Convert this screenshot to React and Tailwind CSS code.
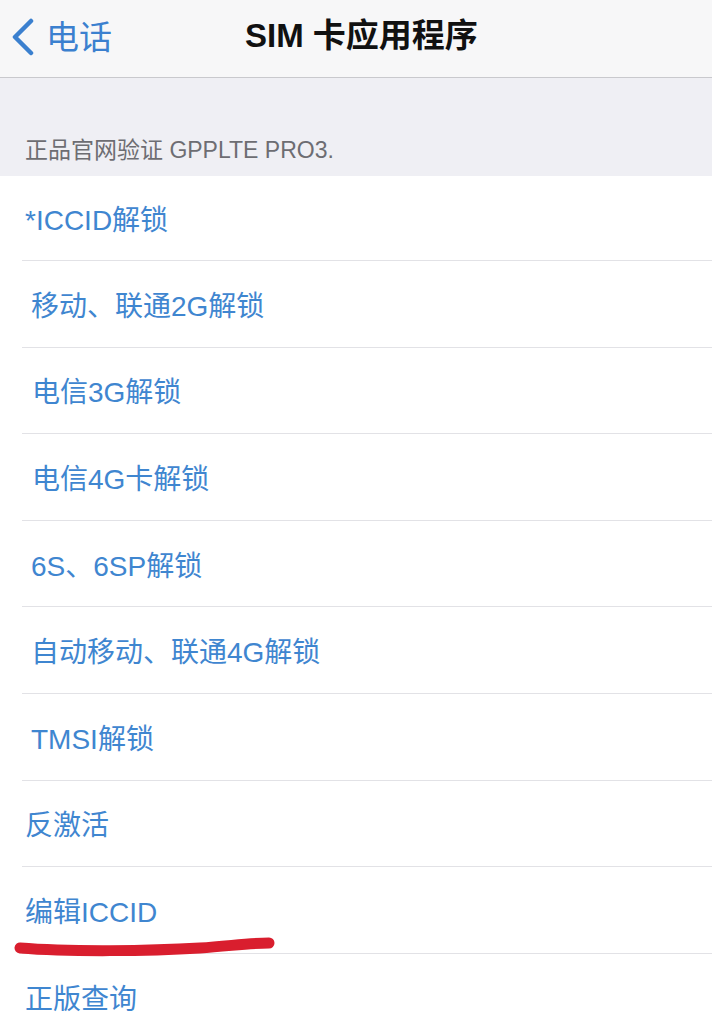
import React from "react";

const font = { fontFamily: '"Liberation Sans","Noto Sans CJK SC",sans-serif' };

const rows = [
  { t: "*ICCID解锁", c: "pl-[25px]", first: true },
  { t: "移动、联通2G解锁", c: "pl-[31px]" },
  { t: "电信3G解锁", c: "pl-[32px]" },
  { t: "电信4G卡解锁", c: "pl-[32px]" },
  { t: "6S、6SP解锁", c: "pl-[31px]" },
  { t: "自动移动、联通4G解锁", c: "pl-[31px]" },
  { t: "TMSI解锁", c: "pl-[31px]" },
  { t: "反激活", c: "pl-[25px]" },
  { t: "编辑ICCID", c: "pl-[25px]", mark: true },
  { t: "正版查询", c: "pl-[25px]" },
];

export default function App() {
  return (
    <div className="w-[712px] h-[1014px] overflow-hidden bg-[#efeff4]" style={font}>
      <div className="relative h-[78px] bg-[#f7f7f8] border-b border-[#c9c9cd] flex items-center">
        <div className="flex items-center pl-[9px] text-[#3b80cf]">
          <svg width="28" height="38" viewBox="0 0 28 38" className="mt-[-4px]">
            <path d="M22 3 L6 19 L22 35" fill="none" stroke="#3b80cf" strokeWidth="4.5" strokeLinecap="round" strokeLinejoin="round" />
          </svg>
          <span className="ml-[9px] text-[33px] leading-none mt-[-3px]">电话</span>
        </div>
        <div className="absolute left-[245px] top-0 h-full flex items-center">
          <span className="text-[33px] font-bold text-[#111] leading-none mt-[-6px]">SIM 卡应用程序</span>
        </div>
      </div>
      <div className="h-[98px] flex items-end pl-[25px] pb-[14px]">
        <span className="text-[23px] text-[#6d6d72] leading-none">正品官网验证 GPPLTE PRO3.</span>
      </div>
      <div className="bg-white">
        {rows.map((r, i) => (
          <div key={i} className="relative">
            <div className={`${r.first ? "h-[84px]" : "h-[85.6px]"} flex items-center pt-[6px] ${r.c}`}>
              <span className="text-[28px] text-[#3f86d0] leading-none">{r.t}</span>
            </div>
            {i < rows.length - 1 && <div className="ml-[22px] h-px bg-[#e2e2e6]" />}
            {r.mark && (
              <svg className="absolute left-[10px] top-[64px]" width="270" height="26" viewBox="0 0 270 26">
                <path d="M10 17 C 60 21, 140 20, 190 17 C 220 15, 240 12, 259 12" fill="none" stroke="#d91e2e" strokeWidth="11" strokeLinecap="round" />
              </svg>
            )}
          </div>
        ))}
      </div>
    </div>
  );
}
